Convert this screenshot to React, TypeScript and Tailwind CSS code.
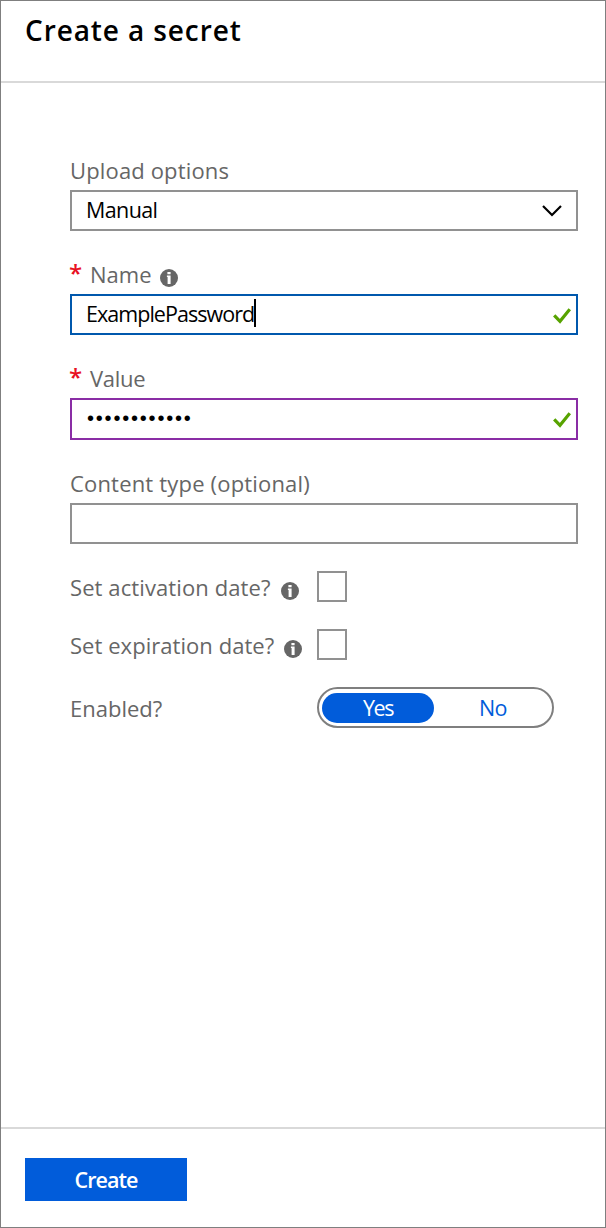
import type { ReactNode } from "react";

function InfoIcon({ className }: { className: string }) {
  return (
    <svg viewBox="0 0 18 18" className={`h-[18px] w-[18px] shrink-0 ${className}`}>
      <circle cx="9" cy="9" r="9" fill="#666666" />
      <path d="M7.4 2.9h3.2v2.4H7.4zM6.9 6.6h3.7v8.4H7.6V8.1h-.7z" fill="#ffffff" />
    </svg>
  );
}

function Check() {
  return (
    <svg viewBox="0 0 18 16" className="mt-[2px] h-4 w-[18px]" fill="none" stroke="#57a300" strokeWidth="3.2">
      <path d="M1.2 7.3 7 13.3 16.8 1.3" />
    </svg>
  );
}

function Field({ label, children, border }: { label: ReactNode; children?: ReactNode; border: string }) {
  return (
    <div className="flex flex-col">
      <div className="flex h-[37px] items-center pb-1 leading-[30px] text-[#666666]">{label}</div>
      <div className={`flex items-center justify-between border-2 pl-[14px] text-black ${border}`}>{children}</div>
    </div>
  );
}

function Required() {
  return <span className="-ml-px w-[21px] shrink-0 pb-0.5 text-[24px] font-semibold text-[#e81123]">*</span>;
}

export default function App() {
  return (
    <div className="flex h-[1228px] w-[606px] flex-col border border-[#7f7f7f] bg-white font-['Open_Sans','Noto_Sans',sans-serif] text-[22px]">
      <header className="flex h-[82px] shrink-0 border-b-2 border-[#d9d9d9] pt-[9px] pl-6">
        <h1 className="text-[28px] leading-[40px] font-semibold tracking-[0.9px] text-black">
          <span>Create a secret</span>
        </h1>
      </header>
      <main className="flex w-[577px] flex-1 flex-col gap-[26px] pt-[70px] pl-[69px]">
        <Field label={<span className="tracking-[0.15px]">Upload options</span>} border="h-[41px] border-[#919191] pr-[14px]">
          <span className="text-[21.5px] tracking-[-0.6px]">Manual</span>
          <svg viewBox="0 0 20 12" className="h-3 w-5" fill="none" stroke="#000000" strokeWidth="2.2">
            <path d="M1 1 10 10 19 1" />
          </svg>
        </Field>
        <Field
          label={<><Required /><span>Name</span><InfoIcon className="ml-2 mt-[9px]" /></>}
          border="h-[41px] border-[#0058ad] pr-[5px]"
        >
          <span className="flex items-center">
            <span className="text-[21.5px] tracking-[-0.96px]">ExamplePassword</span>
            <span className="mb-1 h-7 w-0.5 bg-black" />
          </span>
          <Check />
        </Field>
        <Field label={<><Required /><span className="tracking-[-0.3px]">Value</span></>} border="h-[42px] border-[#8a2da5] pr-[5px]">
          <span className="pb-[3px] pl-px font-['Liberation_Sans',sans-serif] text-[20px] leading-[30px] tracking-[1.8px]">••••••••••••</span>
          <Check />
        </Field>
        <Field label={<span className="tracking-[0.18px]">Content type (optional)</span>} border="h-[41px] border-[#919191]" />
        <div className="mt-[1px] flex flex-col text-[#666666]">
          <div className="flex h-[31px]">
            <div className="flex w-[247px] items-center">
              <span className="pt-0.5 tracking-[0.1px]">Set activation date?</span>
              <InfoIcon className="ml-[10px] mt-2" />
            </div>
            <div className="h-[31px] w-[30px] border-2 border-[#919191]" />
          </div>
          <div className="mt-[27px] flex h-[31px]">
            <div className="flex w-[247px] items-center">
              <span className="pt-0.5 tracking-[0.05px]">Set expiration date?</span>
              <InfoIcon className="ml-[10px] mt-2" />
            </div>
            <div className="h-[31px] w-[30px] border-2 border-[#919191]" />
          </div>
          <div className="mt-[27px] flex h-[41px]">
            <div className="flex w-[247px] items-center">
              <span className="pt-0.5">Enabled?</span>
            </div>
            <div className="flex w-[237px] items-center rounded-full border-2 border-[#7f7f7f] pl-[3px]">
              <div className="flex h-[30px] w-[112px] items-center justify-center rounded-full bg-[#015cda] text-white">
                <span className="pt-0.5 text-[21.5px] tracking-[-1.5px]">Yes</span>
              </div>
              <div className="flex flex-1 items-center justify-center text-[#015cda]">
                <span className="pt-0.5 text-[21.5px] tracking-[-0.6px]">No</span>
              </div>
            </div>
          </div>
        </div>
      </main>
      <footer className="h-[100px] shrink-0 border-t-2 border-[#d9d9d9] pt-[29px] pl-6">
        <button className="flex h-[43px] w-[162px] items-center justify-center bg-[#015cda] font-semibold text-white">
          <span className="pt-0.5 text-[21.5px] tracking-[-0.95px]">Create</span>
        </button>
      </footer>
    </div>
  );
}
